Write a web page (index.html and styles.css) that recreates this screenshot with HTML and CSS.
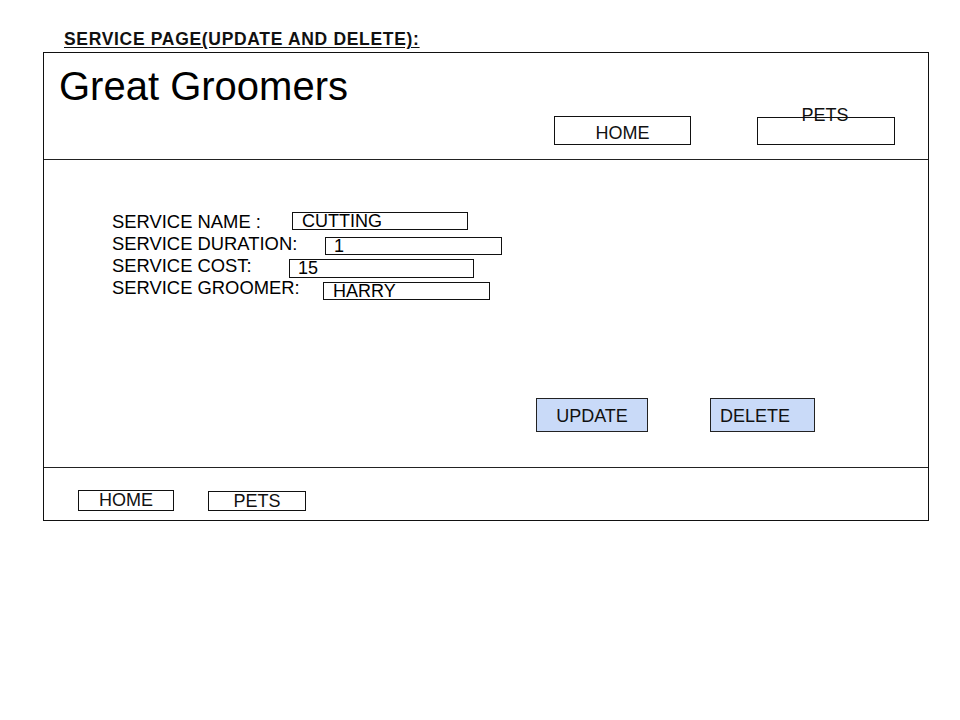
FILE: index.html
```html
<!DOCTYPE html>
<html lang="en">
<head>
<meta charset="utf-8">
<title>Service Page</title>
<link rel="stylesheet" href="styles.css">
</head>
<body>
<div class="page">
  <h1 class="page-title">SERVICE PAGE(UPDATE AND DELETE):</h1>
  <div class="frame">
    <header class="header">
      <div class="brand">Great Groomers</div>
      <nav class="top-nav">
        <a class="nav-box nav-box--home">HOME</a>
        <a class="nav-box nav-box--pets"><span class="nav-label-raised">PETS</span></a>
      </nav>
    </header>
    <main class="content">
      <div class="form">
        <div class="row row--name"><span class="label">SERVICE NAME :</span><span class="field">CUTTING</span></div>
        <div class="row row--duration"><span class="label">SERVICE DURATION:</span><span class="field">1</span></div>
        <div class="row row--cost"><span class="label">SERVICE COST:</span><span class="field">15</span></div>
        <div class="row row--groomer"><span class="label">SERVICE GROOMER:</span><span class="field">HARRY</span></div>
      </div>
      <div class="actions">
        <button class="btn btn--update">UPDATE</button>
        <button class="btn btn--delete">DELETE</button>
      </div>
    </main>
    <footer class="footer">
      <a class="foot-box foot-box--home">HOME</a>
      <a class="foot-box foot-box--pets">PETS</a>
    </footer>
  </div>
</div>
</body>
</html>
```
FILE: styles.css
```css
* { box-sizing: border-box; }
html, body { margin: 0; padding: 0; background: #fff; }
body {
  font-family: "Liberation Sans", Arial, sans-serif;
  color: #000;
  width: 960px;
  height: 720px;
}
.page { padding-top: 29px; }

.page-title {
  margin: 0 0 3px 64px;
  font-size: 17.5px;
  letter-spacing: 0.68px;
  line-height: 20px;
  font-weight: bold;
  text-decoration: underline;
  text-underline-offset: 2px;
  color: #111;
}

.frame {
  margin-left: 43px;
  width: 886px;
  border: 1px solid #111;
}

/* header */
.header {
  display: flow-root;
  height: 107px;
  border-bottom: 1px solid #222;
}
.brand {
  margin: 10px 0 0 15px;
  font-size: 40px;
  line-height: 46px;
}
.top-nav {
  display: flex;
  align-items: flex-start;
  margin-top: 7px;
  padding-left: 510px;
}
.nav-box {
  display: block;
  border: 1px solid #111;
  font-size: 18px;
  text-align: center;
  color: #111;
}
.nav-box--home {
  width: 137px;
  height: 29px;
  padding-top: 6px;
  line-height: 20px;
}
.nav-box--pets {
  width: 138px;
  height: 28px;
  margin-top: 1px;
  margin-left: 66px;
  line-height: 20px;
}
.nav-label-raised {
  display: block;
  margin-top: -13px;
  padding-right: 2px;
}

/* content */
.content {
  display: flow-root;
  height: 308px;
  border-bottom: 1px solid #222;
}
.form {
  padding-top: 51px;
  margin-left: 68px;
}
.row {
  display: flex;
  align-items: flex-start;
  height: 22px;
  font-size: 18px;
}
.label {
  display: block;
  font-size: 18.4px;
  line-height: 22px;
  white-space: nowrap;
  flex: none;
}
.field {
  display: block;
  flex: none;
  height: 18px;
  border: 1px solid #111;
  padding-left: 9px;
  line-height: 17px;
  white-space: nowrap;
}
.row--name .label { width: 180px; }
.row--name .field { width: 176px; margin-top: 1px; }
.row--duration .label { width: 213px; }
.row--duration .field { width: 177px; margin-top: 4px; padding-left: 8px; }
.row--cost .label { width: 177px; }
.row--cost .field { width: 185px; height: 19px; margin-top: 4px; padding-left: 8px; }
.row--groomer .label { width: 211px; }
.row--groomer .field { width: 167px; margin-top: 5px; }

.actions {
  display: flex;
  align-items: flex-start;
  margin-top: 99px;
  padding-left: 492px;
}
.btn {
  display: block;
  height: 34px;
  margin: 0;
  padding: 7px 0 5px;
  border: 1px solid #222;
  background: #c9daf8;
  font-family: "Liberation Sans", Arial, sans-serif;
  font-size: 18px;
  line-height: 20px;
  color: #111;
}
.btn--update { width: 112px; text-align: center; }
.btn--delete { width: 105px; margin-left: 62px; text-align: left; padding-left: 9px; }

/* footer */
.footer {
  display: flex;
  align-items: flex-start;
  height: 52px;
  padding-left: 34px;
}
.foot-box {
  display: block;
  border: 1px solid #111;
  font-size: 18px;
  line-height: 19px;
  text-align: center;
  color: #111;
}
.foot-box--home { width: 96px; height: 21px; margin-top: 22px; }
.foot-box--pets { width: 98px; height: 20px; margin-top: 23px; margin-left: 34px; }
```
